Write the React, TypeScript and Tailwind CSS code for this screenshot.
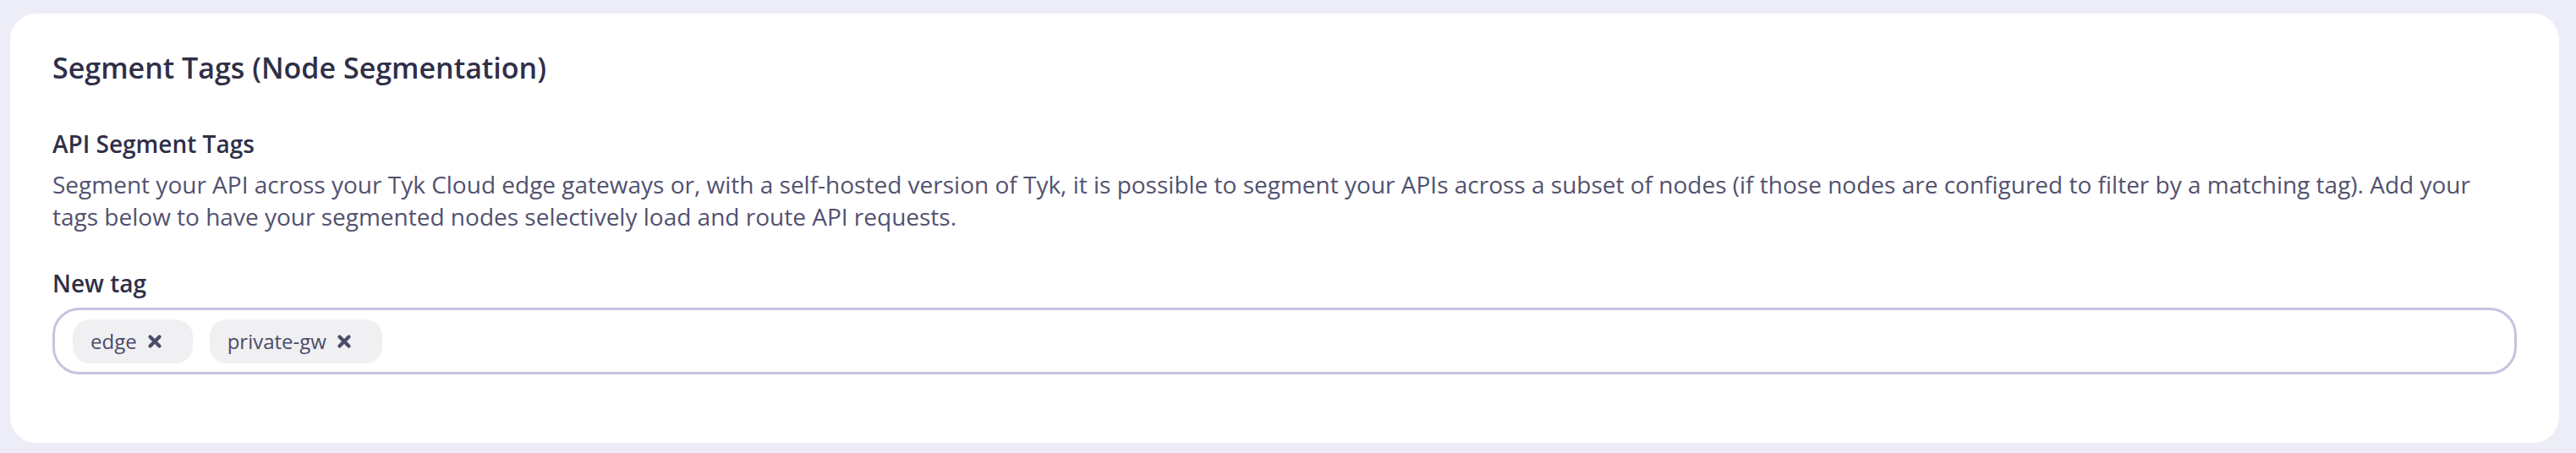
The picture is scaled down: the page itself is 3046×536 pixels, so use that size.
const tags = ['edge', 'private-gw'];

const XMark = () => (
  <svg width="18" height="18" viewBox="0 0 18 18" className="shrink-0">
    <path d="M3.5 3.5 L14.5 14.5 M14.5 3.5 L3.5 14.5" stroke="#4b4b6b" strokeWidth="4.2" strokeLinecap="round" fill="none" />
  </svg>
);

const TagChip = ({ label }: { label: string }) => (
  <div className="flex h-[52px] items-center gap-[12px] rounded-[20px] bg-[#f0f0f2] pl-[21px] pr-[36px]">
    <span className="text-[24px] leading-[32px] text-[#4b4b6b]">{label}</span>
    <button type="button" className="flex items-center">
      <XMark />
    </button>
  </div>
);

export default function App() {
  return (
    <div className="min-h-screen bg-[#ededf7] pt-[16px] pb-[12px] pl-[12px] pr-[20px] font-['Open_Sans',sans-serif]">
      <div className="rounded-[31px] bg-white px-[50px] pt-[42px] pb-[81px]">
        <h2 className="text-[34px] leading-[44px] font-semibold text-[#2f2f48]">
          Segment Tags (Node Segmentation)
        </h2>

        <div className="mt-[49px]">
          <h3 className="text-[28px] leading-[38px] font-semibold text-[#2f2f48]">API Segment Tags</h3>
          <p className="mt-[10px] text-[28px] leading-[38px] text-[#52526f]">
            Segment your API across your Tyk Cloud edge gateways or, with a self-hosted version of Tyk, it is possible to
            segment your APIs across a subset of nodes (if those nodes are configured to filter by a matching tag). Add your
            tags below to have your segmented nodes selectively load and route API requests.
          </p>
        </div>

        <label className="mt-[41px] block text-[28px] leading-[38px] font-semibold text-[#2f2f48]">New tag</label>
        <div className="mt-[10px] flex h-[79px] items-center gap-[20px] rounded-[32px] border-[3px] border-[#c4c4e2] px-[21px]">
          {tags.map((t) => (
            <TagChip key={t} label={t} />
          ))}
        </div>
      </div>
    </div>
  );
}
